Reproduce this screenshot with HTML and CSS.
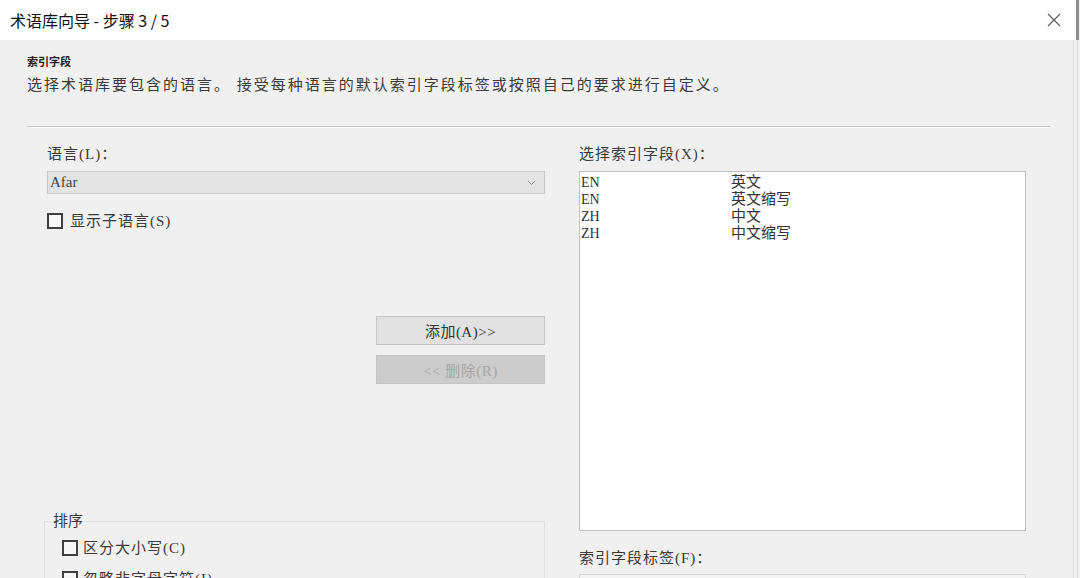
FILE: index.html
```html
<!DOCTYPE html>
<html lang="zh-CN">
<head>
  <meta charset="UTF-8">
  <title>术语库向导</title>
  <link rel="stylesheet" href="styles.css">
</head>
<body>

  <div class="screen">
    <div class="dialog">
      <div class="titlebar">
        <span class="title">术语库向导 - 步骤 3 / 5</span>
        <svg class="close" width="14" height="14" viewBox="0 0 14 14">
          <path d="M1 1 L13 13 M13 1 L1 13" stroke="#5a5a5a" stroke-width="1.1" fill="none"/>
        </svg>
      </div>

      <div class="content">
        <div class="header">
          <div class="step-name">索引字段</div>
          <div class="step-desc">选择术语库要包含的语言。 接受每种语言的默认索引字段标签或按照自己的要求进行自定义。</div>
        </div>
        <div class="separator"></div>

        <div class="columns">
          <div class="col-left">
            <div class="label">语言(L)：</div>
            <div class="combo">
              <span>Afar</span>
              <svg width="9" height="6" viewBox="0 0 9 6">
                <path d="M1 1 L4.5 4.5 L8 1" stroke="#8a8a8a" stroke-width="1" fill="none"/>
              </svg>
            </div>
            <label class="check first-check"><span class="box"></span>显示子语言(S)</label>

            <div class="buttons">
              <button class="btn">添加(A)&gt;&gt;</button>
              <button class="btn disabled">&lt;&lt; 删除(R)</button>
            </div>

            <fieldset class="group">
              <legend>排序</legend>
              <label class="check"><span class="box"></span>区分大小写(C)</label>
              <label class="check"><span class="box"></span>忽略非字母字符(I)</label>
            </fieldset>
          </div>

          <div class="col-right">
            <div class="label">选择索引字段(X)：</div>
            <div class="listbox">
              <div class="row"><span class="code">EN</span><span>英文</span></div>
              <div class="row"><span class="code">EN</span><span>英文缩写</span></div>
              <div class="row"><span class="code">ZH</span><span>中文</span></div>
              <div class="row"><span class="code">ZH</span><span>中文缩写</span></div>
            </div>
            <div class="label label-bottom">索引字段标签(F)：</div>
            <div class="textbox"></div>
          </div>
        </div>
      </div>
    </div>

    <div class="edge">
      <div class="edge-top"></div>
      <div class="edge-body"></div>
    </div>
  </div>

</body>
</html>
```

FILE: styles.css
```css
html, body {
  margin: 0;
  padding: 0;
  width: 1080px;
  height: 578px;
  overflow: hidden;
  background-color: #f0f0f0;
  font-family: "Liberation Serif", "Noto Sans CJK SC", serif;
  color: #333;
}

.screen {
  display: flex;
  height: 578px;
}

.dialog {
  width: 1073px;
  display: flex;
  flex-direction: column;
}

.titlebar {
  height: 40px;
  flex: none;
  background-color: #fff;
  display: flex;
  align-items: center;
  justify-content: space-between;
  padding: 0 12px 0 10px;
}

.title {
  font-family: "Noto Sans CJK SC", sans-serif;
  font-size: 16px;
  color: #111;
}

.content {
  flex: 1;
  background-color: #f0f0f0;
  overflow: hidden;
}

.header {
  padding: 14px 0 0 27px;
}

.step-name {
  font-family: "Noto Sans CJK SC", sans-serif;
  font-size: 11px;
  font-weight: bold;
  line-height: 15px;
  color: #222;
}

.step-desc {
  margin-top: 6px;
  font-size: 15px;
  line-height: 20px;
  letter-spacing: 2px;
  color: #3a3a3a;
}

.separator {
  margin: 31px 23px 0 27px;
  border-top: 1px solid #c4c4c4;
  border-bottom: 1px solid #fafafa;
}

.columns {
  display: flex;
  gap: 34px;
  padding-left: 47px;
}

.col-left {
  width: 498px;
  display: flex;
  flex-direction: column;
}

.col-right {
  width: 447px;
}

.label {
  margin-top: 16px;
  font-size: 15px;
  line-height: 20px;
  letter-spacing: 1px;
  color: #3a3a3a;
}

.combo {
  margin-top: 7px;
  height: 21px;
  border: 1px solid #c9c9c9;
  background-color: #e3e3e3;
  display: flex;
  align-items: center;
  justify-content: space-between;
  padding: 0 8px 0 2px;
  font-size: 15px;
  color: #444;
}

.check {
  display: flex;
  align-items: center;
  gap: 7px;
  font-size: 15px;
  line-height: 16px;
  letter-spacing: 1px;
  color: #3a3a3a;
}

.first-check {
  margin-top: 19px;
}

.box {
  width: 12px;
  height: 12px;
  border: 2px solid #404040;
  background-color: #f7f7f7;
  flex: none;
}

.buttons {
  margin-top: 87px;
  display: flex;
  flex-direction: column;
  align-items: flex-end;
  gap: 10px;
}

.btn {
  width: 169px;
  height: 29px;
  margin: 0;
  padding: 0;
  border: 1px solid #c6c6c6;
  background-color: #e1e1e1;
  font-family: "Liberation Serif", "Noto Sans CJK SC", serif;
  font-size: 15px;
  color: #333;
  letter-spacing: 0.5px;
}

.btn.disabled {
  background-color: #cccccc;
  border-color: #c4c4c4;
  color: #a6a6a6;
}

.group {
  margin: 129px 0 0 -3px;
  width: 501px;
  border: 1px solid #e0e0e0;
  border-bottom: none;
  padding: 11px 0 0 17px;
  box-sizing: border-box;
}

.group legend {
  font-size: 15px;
  line-height: 16px;
  padding: 0 0 0 1px;
  margin-left: -10px;
  color: #3a3a3a;
}

.group .check {
  gap: 5px;
  margin-bottom: 15px;
}

.listbox {
  margin-top: 7px;
  height: 356px;
  border: 1px solid #c0c0c0;
  background-color: #fff;
  padding: 2px 0 0 1px;
}

.row {
  display: flex;
  font-size: 15px;
  line-height: 17px;
  color: #333;
}

.code {
  width: 150px;
  font-size: 14px;
}

.label-bottom {
  margin-top: 17px;
}

.textbox {
  margin-top: 6px;
  height: 24px;
  border: 1px solid #d6d6d6;
  background-color: #f4f4f4;
}

.edge {
  flex: 1;
  display: flex;
  flex-direction: column;
}

.edge-top {
  height: 40px;
  background-color: #fff;
  border-right: 3px solid #8e8e8e;
  margin-right: 1px;
}

.edge-body {
  flex: 1;
  border-left: 1px solid #dadada;
  border-right: 1px solid #d6d6d6;
  margin-right: 2px;
  background-color: #f0f0f0;
}
```
